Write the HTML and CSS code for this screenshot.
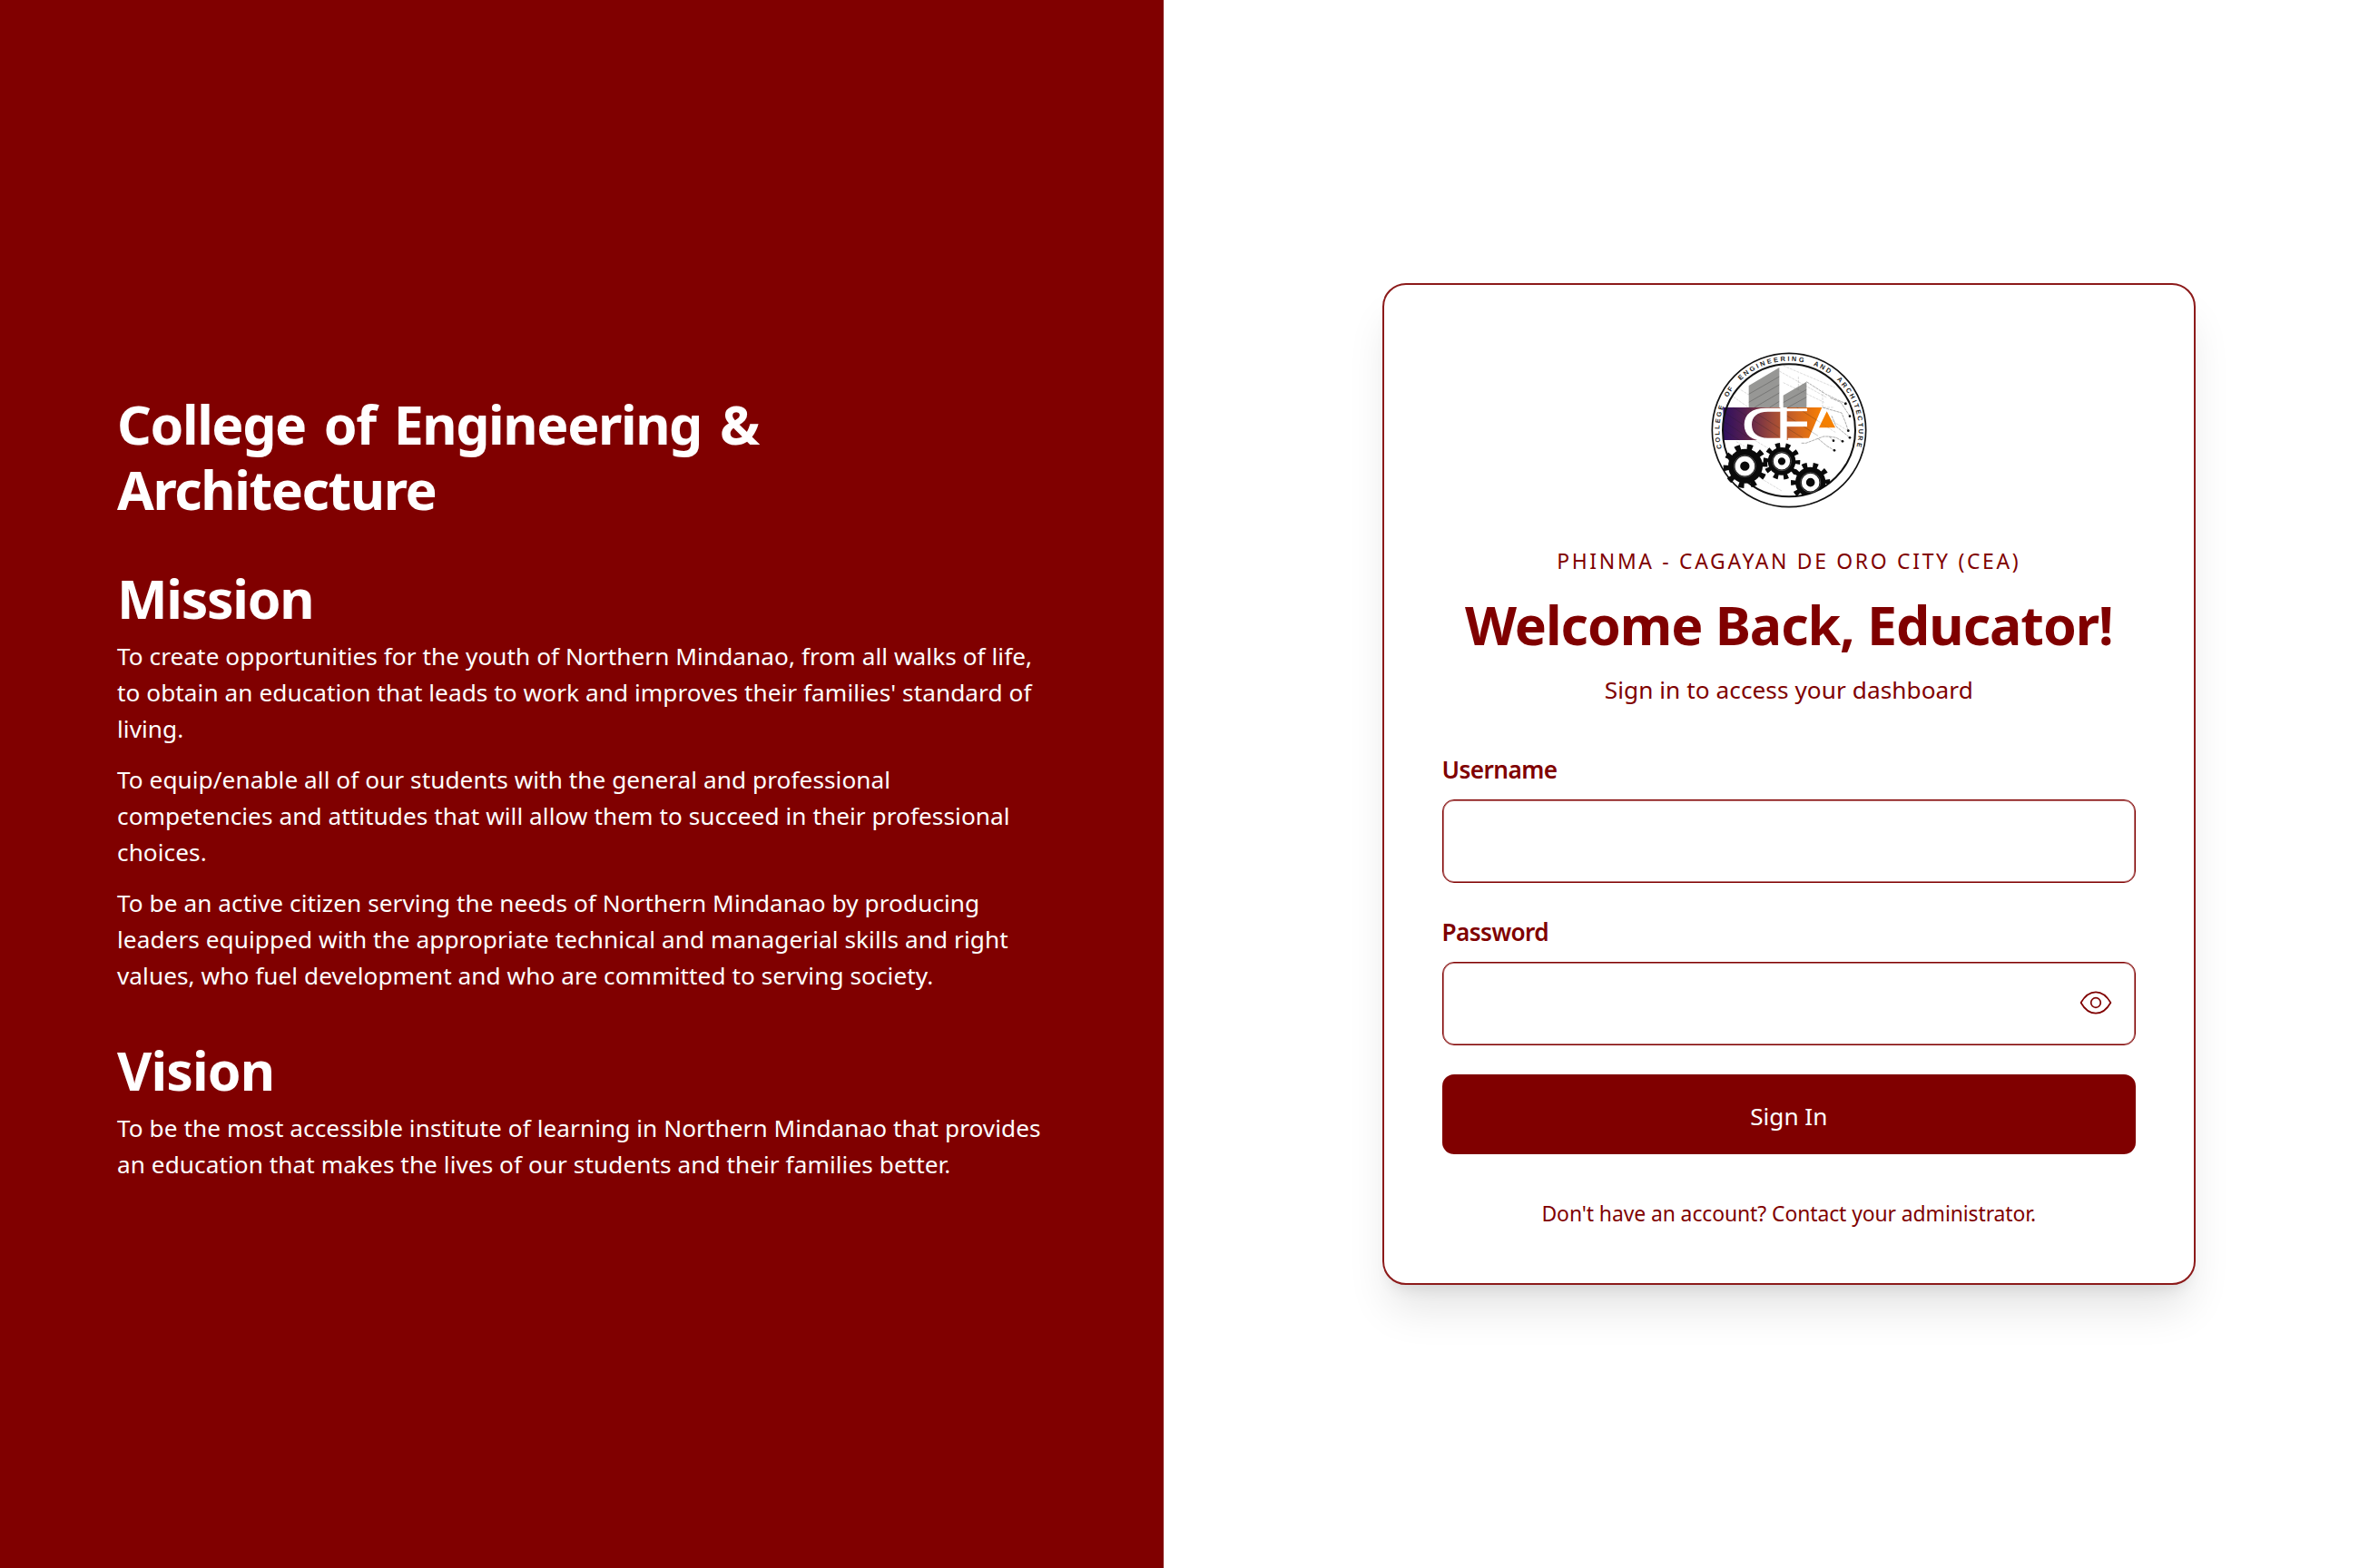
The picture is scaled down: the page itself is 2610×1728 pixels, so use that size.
FILE: index.html
```html
<!DOCTYPE html>
<html lang="en">
<head>
<meta charset="utf-8">
<title>Sign In - College of Engineering &amp; Architecture</title>
<link rel="stylesheet" href="styles.css">
</head>
<body>
<main class="page">
  <section class="about">
    <h1 class="heading heading-college">College of Engineering &amp;<br>Architecture</h1>
    <h2 class="heading heading-mission">Mission</h2>
    <p>To create opportunities for the youth of Northern Mindanao, from all walks of life,<br>to obtain an education that leads to work and improves their families' standard of<br>living.</p>
    <p class="next">To equip/enable all of our students with the general and professional<br>competencies and attitudes that will allow them to succeed in their professional<br>choices.</p>
    <p class="next">To be an active citizen serving the needs of Northern Mindanao by producing<br>leaders equipped with the appropriate technical and managerial skills and right<br>values, who fuel development and who are committed to serving society.</p>
    <h2 class="heading heading-vision">Vision</h2>
    <p>To be the most accessible institute of learning in Northern Mindanao that provides<br>an education that makes the lives of our students and their families better.</p>
  </section>

  <section class="login">
    <div class="card">
      <svg class="logo" viewBox="46 39 516 516" role="img" aria-label="CEA seal">
        <defs>
          <linearGradient id="band" gradientUnits="userSpaceOnUse" x1="88" y1="0" x2="415" y2="0">
            <stop offset="0" stop-color="#30105f"/>
            <stop offset=".22" stop-color="#56204f"/>
            <stop offset=".5" stop-color="#a04a38"/>
            <stop offset=".75" stop-color="#d2661f"/>
            <stop offset="1" stop-color="#f98000"/>
          </linearGradient>
          <clipPath id="inner"><circle cx="304" cy="298" r="220"/></clipPath>
          <path id="ring" d="M81.8 357.6A230 230 0 1 1 526.2 357.6"/>
        </defs>
        <circle cx="304" cy="297" r="254" fill="#fff" stroke="#111" stroke-width="5"/>
        <g class="ring-text">
          <text><textPath href="#ring" startOffset="0" textLength="142">COLLEGE</textPath></text>
          <text><textPath href="#ring" startOffset="174" textLength="34">OF</textPath></text>
          <text><textPath href="#ring" startOffset="244" textLength="226">ENGINEERING</textPath></text>
          <text><textPath href="#ring" startOffset="503" textLength="60">AND</textPath></text>
          <text><textPath href="#ring" startOffset="594" textLength="242">ARCHITECTURE</textPath></text>
        </g>
        <path fill="#979795" d="M171 150L272 90V222H171ZM285 182L362 137V222H285Z"/>
        <path fill="url(#band)" d="M86 222H413L370 323H300V330H88Z"/>
        <path fill="#f58000" d="M429 235L457 289H403Z"/>
        <g clip-path="url(#inner)" fill="none">
          <path stroke="#222" stroke-opacity=".5" stroke-width="1.6" d="M171 178L272 120M171 205L272 147M190 222L272 174M240 222L272 202M285 206L362 163M300 222L362 188"/>
          <path stroke="#222" stroke-opacity=".45" stroke-width="1.6" d="M92 240L230 328M88 268L180 328M88 296L140 330M120 222L270 318M165 222L275 292M270 232L400 316M330 222L400 267M297 290L350 323"/>
          <path stroke="#777" stroke-opacity=".55" stroke-width="1.4" stroke-dasharray="9 3" d="M285 84L455 156M272 102L430 190M285 140L420 205M110 180L170 222M125 152L171 180M335 120V165M415 165V222H450M400 267L460 306M440 262L500 300M200 450L280 498M130 335L190 370M190 330L240 360"/>
          <path stroke="#666" stroke-width="1.6" stroke-dasharray="10 2" d="M362 137L425 178L460 195L491 209M415 222L450 232L478 240L490 270L500 299M440 190L475 205L505 251M445 250L460 285L505 322M345 340H360L418 318L437 318L451 332M437 318L460 322L481 334M400 325L430 350L454 364"/>
        </g>
        <g fill="#111"><circle cx="491" cy="209" r="4.5"/><circle cx="505" cy="251" r="4"/><circle cx="500" cy="299" r="4"/><circle cx="505" cy="322" r="4"/><circle cx="451" cy="332" r="4"/><circle cx="481" cy="334" r="4"/><circle cx="454" cy="364" r="4"/></g>
        <path fill="#fff" d="M280 224H228C180 224 156 245 156 279S180 333 228 333H280V323H235C198 323 181 305 181 279S198 236 235 236H280Z"/>
        <g fill="none" stroke="#fff">
          <path stroke-width="22" d="M286 222V331"/>
          <path stroke-width="9" d="M275 230H364"/>
          <path stroke-width="17" d="M290 277H364"/>
        </g>
        <circle cx="304" cy="298" r="219" fill="none" stroke="#111" stroke-width="6"/>
        <g fill="#0a0a0a">
          <circle cx="160" cy="416" r="57"/><circle cx="280" cy="400" r="46"/>
          <g fill="none" stroke="#0a0a0a">
            <circle cx="160" cy="416" r="62" stroke-width="22" pathLength="20" stroke-dasharray=".9 1.1" stroke-dashoffset=".8"/>
            <circle cx="280" cy="400" r="51" stroke-width="20" pathLength="20" stroke-dasharray=".9 1.1" stroke-dashoffset=".3"/>
          </g>
          <g clip-path="url(#inner)">
            <circle cx="375" cy="469" r="50"/>
            <circle cx="375" cy="469" r="55" fill="none" stroke="#0a0a0a" stroke-width="20" pathLength="20" stroke-dasharray=".9 1.1" stroke-dashoffset=".6"/>
          </g>
        </g>
        <g fill="none" stroke="#fff">
          <circle cx="158" cy="416" r="24" stroke-width="17"/><circle cx="280" cy="400" r="20" stroke-width="15"/><circle cx="375" cy="470" r="22" stroke-width="15"/>
        </g>
        <g fill="none" stroke="#888" stroke-width="1.5"><circle cx="158" cy="416" r="36"/><circle cx="280" cy="400" r="31"/><circle cx="375" cy="470" r="33"/></g>
      </svg>
      <div class="campus">PHINMA - CAGAYAN DE ORO CITY (CEA)</div>
      <h2 class="heading welcome">Welcome Back, Educator!</h2>
      <div class="subtitle">Sign in to access your dashboard</div>
      <form class="form">
        <label class="label" for="username">Username</label>
        <input class="field" id="username" type="text">
        <label class="label label-password" for="password">Password</label>
        <div class="password">
          <input class="field" id="password" type="password">
          <svg class="eye" viewBox="0 0 40 40" fill="none" stroke="#800000" stroke-width="1.7" stroke-linejoin="round">
            <path d="M3.6 20C7.6 13 13.3 8.3 20 8.3S32.4 13 36.4 20C32.4 27 26.7 31.7 20 31.7S7.6 27 3.6 20Z"/>
            <circle cx="20" cy="20" r="5.3"/>
          </svg>
        </div>
        <button class="submit" type="button">Sign In</button>
      </form>
      <div class="help">Don't have an account? Contact your administrator.</div>
    </div>
  </section>
</main>
</body>
</html>
```
FILE: styles.css
```css
* { box-sizing: border-box; margin: 0; }

body {
  font-family: "Noto Sans", "Open Sans", sans-serif;
  font-size: 26.2px;
  line-height: 40px;
  letter-spacing: 0.06px;
  color: #800000;
  background: #fff;
}

.page { display: flex; height: 1728px; }

.about {
  width: 1281.6px;
  padding: 6px 0 0 129px;
  display: flex;
  flex-direction: column;
  justify-content: center;
  background: #800000;
  color: #fff;
  white-space: nowrap;
}
.about p { margin-top: 8px; }
.about .next { margin-top: 16px; }

.heading { font-size: 59px; line-height: 72px; font-weight: 700; }
.heading-college { letter-spacing: -1.4px; word-spacing: 6px; }
.heading-mission { margin-top: 48px; letter-spacing: -1.3px; }
.heading-vision { margin-top: 48px; letter-spacing: -0.9px; }

.login {
  flex: 1;
  padding-left: 50px;
  display: flex;
  justify-content: center;
  align-items: center;
}

.card {
  width: 896.5px;
  height: 1104px;
  padding: 74px 64px 0;
  border: 2px solid #8c1a1a;
  border-radius: 26px;
  background: #fff;
  box-shadow: 0 33px 48px -8px rgba(0, 0, 0, .11), 0 13px 17px -10px rgba(0, 0, 0, .1);
  text-align: center;
  white-space: nowrap;
}

.logo { display: block; width: 172px; height: 172px; margin: 0 auto; overflow: visible; }
.ring-text { font-family: "Liberation Sans", Arial, sans-serif; font-size: 22px; font-weight: 700; letter-spacing: 0; fill: #222; }

.campus { margin-top: 41px; font-size: 22.9px; line-height: 35px; letter-spacing: 2.7px; }
.welcome { margin-top: 16px; letter-spacing: -1.05px; }
.subtitle { margin-top: 16px; }

.form { margin-top: 48px; text-align: left; }
.label { display: block; font-weight: 600; letter-spacing: -0.6px; }
.label-password { margin-top: 34px; }

.field {
  display: block;
  width: 100%;
  height: 92px;
  margin-top: 13px;
  padding: 0 24px;
  border: 1px solid #800000;
  border-radius: 13px;
  background: #fff;
  box-shadow: inset 0 0 0 1px rgba(128, 0, 0, .55);
  font: inherit;
  outline: none;
}

.password { position: relative; }
.eye { position: absolute; right: 24px; top: 24.5px; width: 40px; height: 40px; }

.submit {
  display: block;
  width: 100%;
  height: 88px;
  margin-top: 32px;
  padding: 3px 0 0;
  border: 0;
  border-radius: 13px;
  background: #800000;
  color: #fff;
  font: inherit;
  letter-spacing: 0;
}

.help { margin-top: 48px; font-size: 22.9px; line-height: 35px; letter-spacing: -0.08px; }
```
